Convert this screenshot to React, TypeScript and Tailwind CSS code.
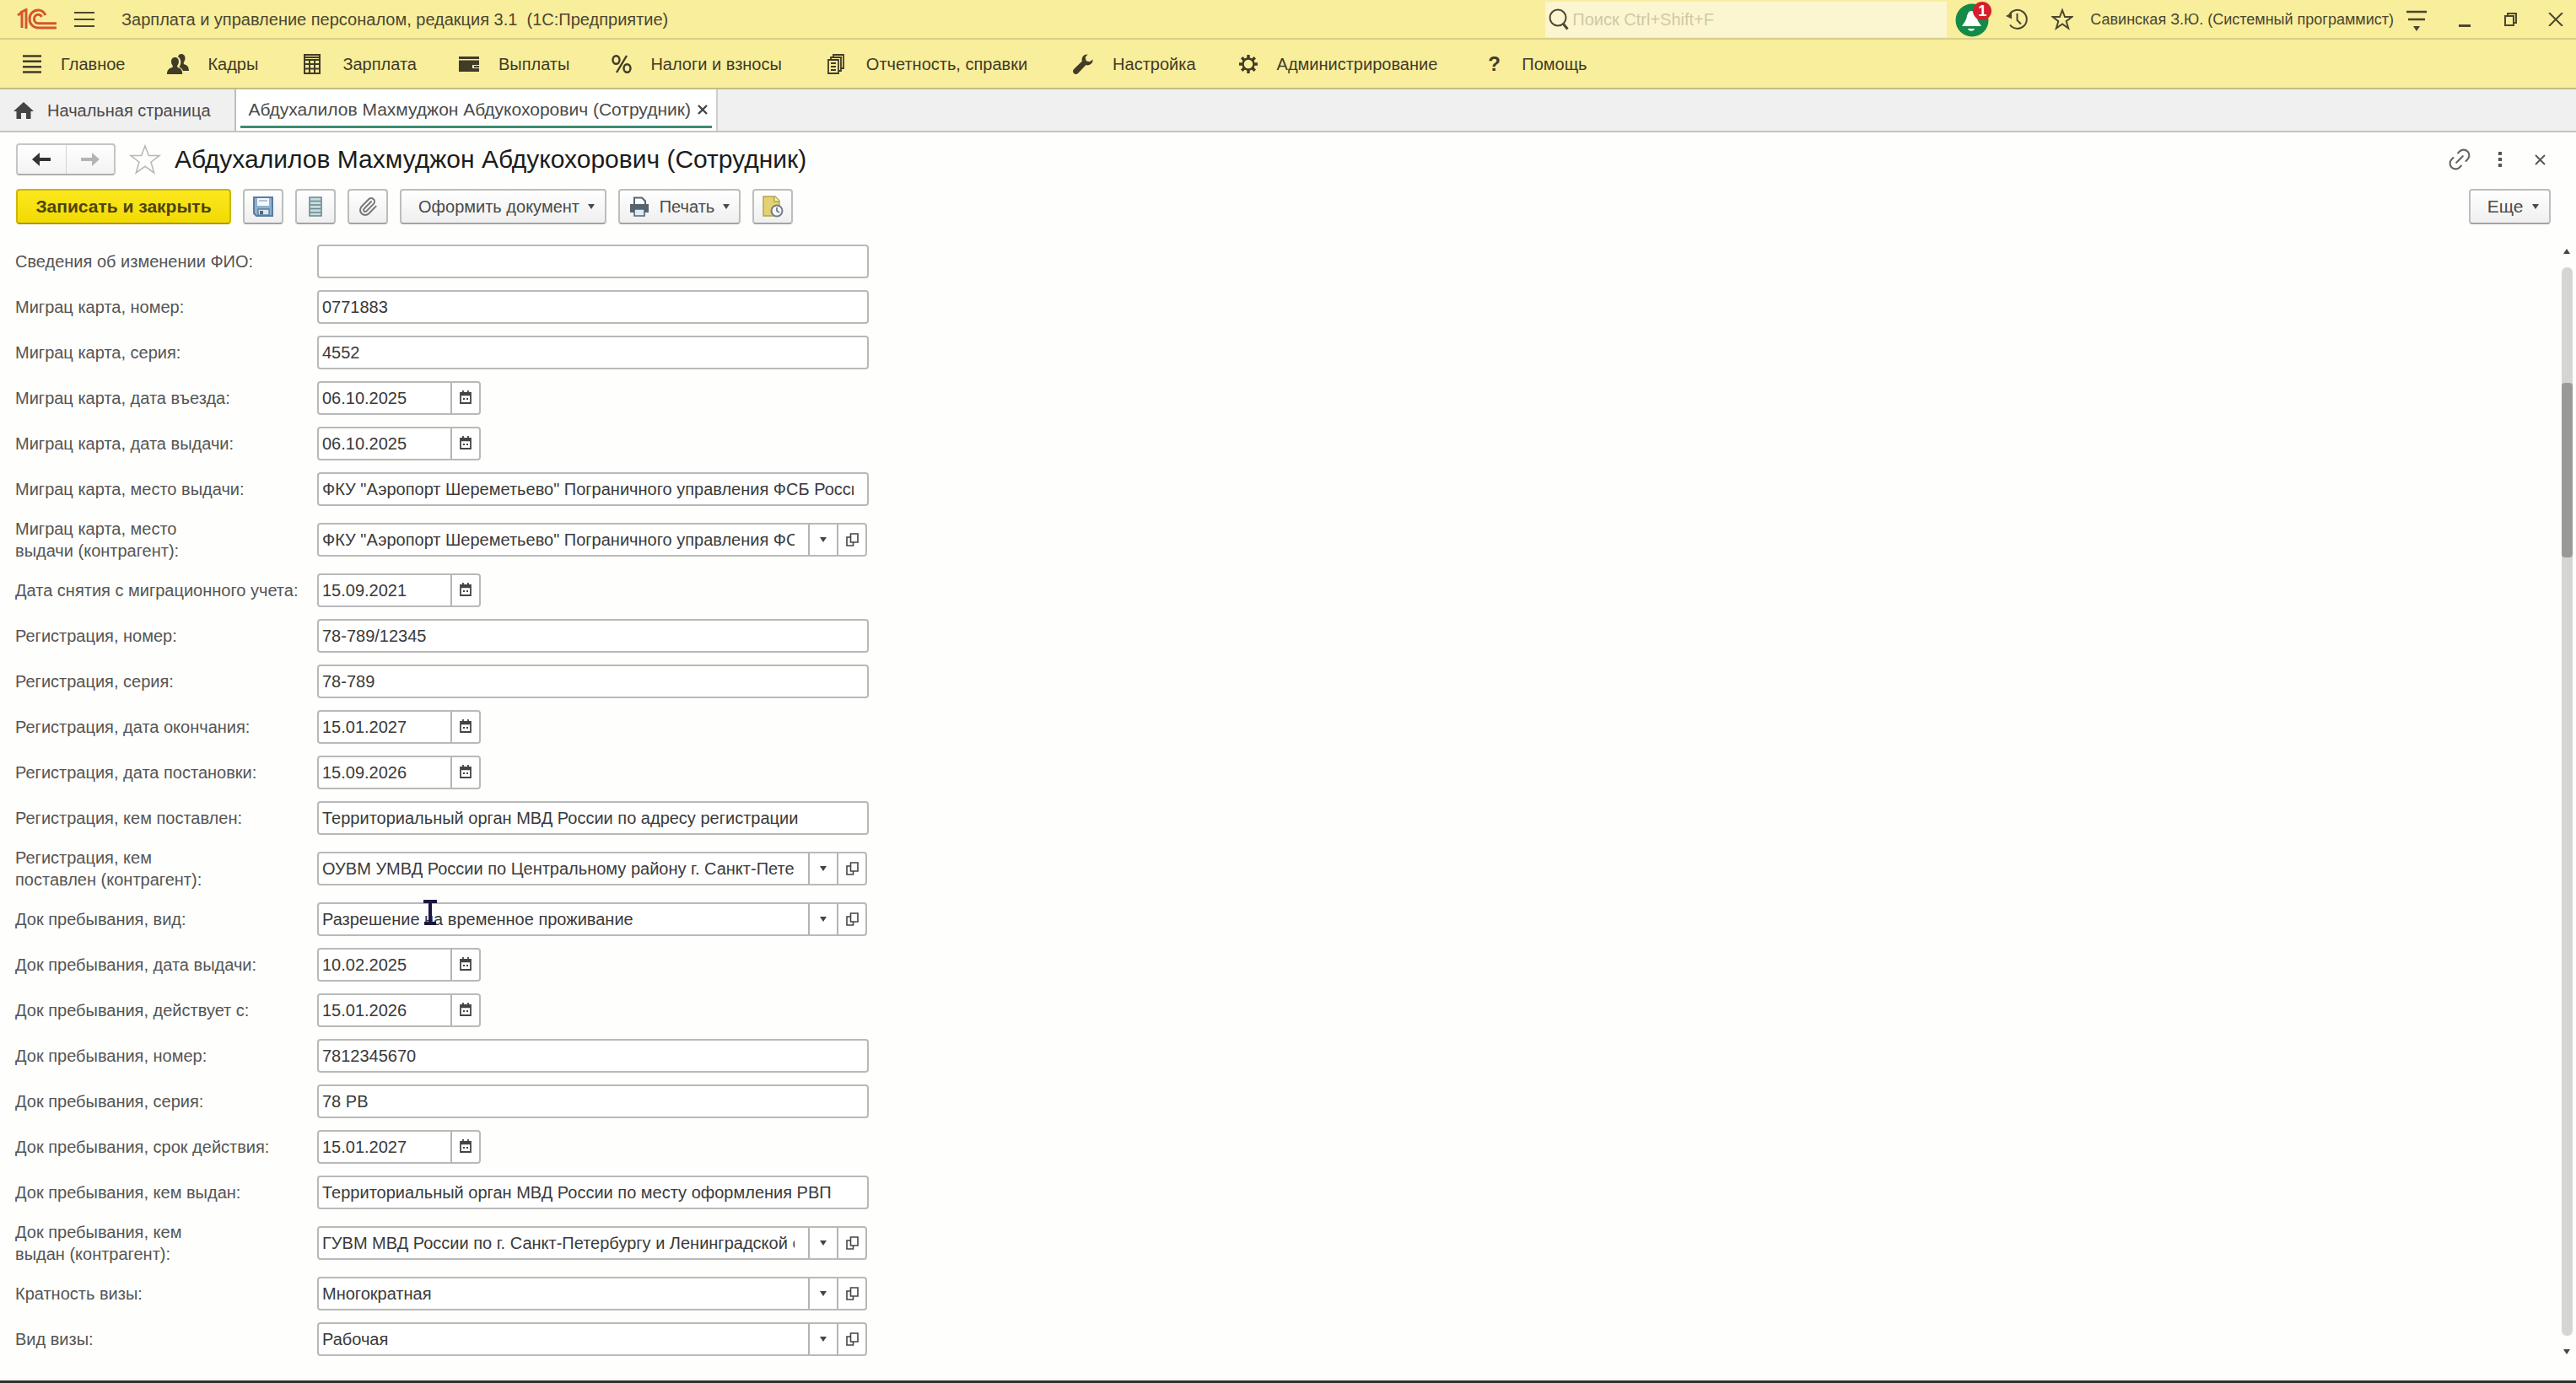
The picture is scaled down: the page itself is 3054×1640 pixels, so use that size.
import { useState } from "react";
import type { ReactNode } from "react";
import { Link2, Paperclip } from "lucide-react";

type FieldKind = "text" | "date" | "lookup";

interface Field {
  id: string;
  label: string;
  kind: FieldKind;
  value: string;
}

const FIELDS: Field[] = [
  { id: "fio", label: "Сведения об изменении ФИО:", kind: "text", value: "" },
  { id: "mk-number", label: "Миграц карта, номер:", kind: "text", value: "0771883" },
  { id: "mk-series", label: "Миграц карта, серия:", kind: "text", value: "4552" },
  { id: "mk-entry", label: "Миграц карта, дата въезда:", kind: "date", value: "06.10.2025" },
  { id: "mk-issued", label: "Миграц карта, дата выдачи:", kind: "date", value: "06.10.2025" },
  { id: "mk-place", label: "Миграц карта, место выдачи:", kind: "text", value: 'ФКУ "Аэропорт Шереметьево" Пограничного управления ФСБ России' },
  { id: "mk-place-org", label: "Миграц карта, место\nвыдачи (контрагент):", kind: "lookup", value: 'ФКУ "Аэропорт Шереметьево" Пограничного управления ФСБ России' },
  { id: "mk-removed", label: "Дата снятия с миграционного учета:", kind: "date", value: "15.09.2021" },
  { id: "reg-number", label: "Регистрация, номер:", kind: "text", value: "78-789/12345" },
  { id: "reg-series", label: "Регистрация, серия:", kind: "text", value: "78-789" },
  { id: "reg-end", label: "Регистрация, дата окончания:", kind: "date", value: "15.01.2027" },
  { id: "reg-start", label: "Регистрация, дата постановки:", kind: "date", value: "15.09.2026" },
  { id: "reg-by", label: "Регистрация, кем поставлен:", kind: "text", value: "Территориальный орган МВД России по адресу регистрации" },
  { id: "reg-by-org", label: "Регистрация, кем\nпоставлен (контрагент):", kind: "lookup", value: "ОУВМ УМВД России по Центральному району г. Санкт-Петербурга" },
  { id: "doc-type", label: "Док пребывания, вид:", kind: "lookup", value: "Разрешение на временное проживание" },
  { id: "doc-issued", label: "Док пребывания, дата выдачи:", kind: "date", value: "10.02.2025" },
  { id: "doc-from", label: "Док пребывания, действует с:", kind: "date", value: "15.01.2026" },
  { id: "doc-number", label: "Док пребывания, номер:", kind: "text", value: "7812345670" },
  { id: "doc-series", label: "Док пребывания, серия:", kind: "text", value: "78 РВ" },
  { id: "doc-until", label: "Док пребывания, срок действия:", kind: "date", value: "15.01.2027" },
  { id: "doc-by", label: "Док пребывания, кем выдан:", kind: "text", value: "Территориальный орган МВД России по месту оформления РВП" },
  { id: "doc-by-org", label: "Док пребывания, кем\nвыдан (контрагент):", kind: "lookup", value: "ГУВМ МВД России по г. Санкт-Петербургу и Ленинградской области" },
  { id: "visa-count", label: "Кратность визы:", kind: "lookup", value: "Многократная" },
  { id: "visa-type", label: "Вид визы:", kind: "lookup", value: "Рабочая" },
];

const FIELD_WIDTH: Record<FieldKind, string> = {
  text: "w-[654px]",
  date: "w-[194px]",
  lookup: "w-[652px]",
};

const toolButton =
  "flex h-[42px] shrink-0 items-center justify-center rounded border-2 border-[#bdbdbd] border-b-[#a3a3a3] bg-linear-to-b from-white to-[#efefef]";

function Caret({ className = "" }: { className?: string }) {
  return (
    <svg viewBox="0 0 8 6" className={`h-[6px] w-[8px] ${className}`}>
      <path d="M0 0h8L4 6z" fill="currentColor" />
    </svg>
  );
}

function LogoIcon() {
  return (
    <svg viewBox="0 0 48 26" className="h-[26px] w-[48px]" fill="none" stroke="#d4562f">
      <path d="M1 8l5-3v18M11 24V1.500L4 5" strokeWidth="3" />
      <path d="M34 8C32 4 29 2 25.500 2 19.500 2 15 6.500 15 12.500S19.500 23 25.500 23H47" strokeWidth="3" />
      <path d="M29.500 10c-.8-1.700-2.200-2.800-4-2.800-3 0-5 2.300-5 5.300s2 5.300 5 5.300H47" strokeWidth="3" />
    </svg>
  );
}

function MenuIcon({ name }: { name: string }) {
  switch (name) {
    case "main":
      return (
        <svg viewBox="0 0 24 24" className="size-6" stroke="currentColor" strokeWidth="2.600">
          <path d="M1 2.500h22M1 8.800h22M1 15.200h22M1 21.500h22" />
        </svg>
      );
    case "staff":
      return (
        <svg viewBox="0 0 26 24" className="h-6 w-[26px]" fill="currentColor">
          <path d="M17 0c3 0 4.500 2.400 4.500 5 0 2-.8 3.600-1.700 4.700v2.200c3.700 1.200 5.900 2.400 6.200 8.100h-7c-.8-2.200-2.600-3.800-4.500-4.600 1.700-2 2.300-5.500 1.500-8.300-.5-1.900-1.600-3.100-3-3.700C13.600 1.200 15 0 17 0z" />
          <path d="M9.500 4c3 0 4.400 2.300 4.400 5 0 2-.7 3.700-1.700 4.800v2c3.700 1 6 2.600 6 8.200H0c0-5.600 2.900-7.200 6.700-8.200v-2C5.700 12.700 5 11 5 9c0-2.700 1.500-5 4.500-5z" />
        </svg>
      );
    case "salary":
      return (
        <svg viewBox="0 0 20 24" className="h-6 w-5" fill="none" stroke="currentColor" strokeWidth="2">
          <path d="M1 1h18v22H1zM1 7h18M1 12h18M1 17.500h18M7 7v16M13 7v16M1 4h18" />
        </svg>
      );
    case "payments":
      return (
        <svg viewBox="0 0 24 18" className="h-[18px] w-6" fill="currentColor">
          <path d="M0 0h24v3H0zM0 4.500h24V10h-8v4h8v4H0z" />
          <path d="M18 11h6v2h-6z" />
        </svg>
      );
    case "taxes":
      return (
        <svg viewBox="0 0 24 22" className="h-[22px] w-6" fill="none" stroke="currentColor" strokeWidth="2.400">
          <ellipse cx="5.500" cy="6" rx="4" ry="4.800" />
          <ellipse cx="18.500" cy="16" rx="4" ry="4.800" />
          <path d="M18 1L6 21" />
        </svg>
      );
    case "reports":
      return (
        <svg viewBox="0 0 20 24" className="h-6 w-5" fill="none" stroke="currentColor" strokeWidth="1.800">
          <path d="M1 7h12v16H1zM4 7V4h12v16h-3M7 4V1h12v16h-3M4 11h6M4 15h6M4 19h6" />
        </svg>
      );
    case "settings":
      return (
        <svg viewBox="0 0 24 24" className="size-6" fill="currentColor">
          <path d="M23.500 6.500c.6 4.500-3.700 8-8 6.600L6 22.900c-1.400 1.400-3.600 1.400-4.900 0-1.400-1.400-1.400-3.500 0-4.900l9.800-9.500C9.600 4.200 13 0 17.500.5L14.700 4l1 4.300 4.300 1z" />
        </svg>
      );
    case "admin":
      return (
        <svg viewBox="0 0 24 24" className="size-6" fill="none" stroke="currentColor">
          <circle cx="12" cy="12" r="6.500" strokeWidth="2.400" />
          <path
            d="M12 1v4M12 19v4M1 12h4M19 12h4M4.200 4.200l3 3M16.800 16.800l3 3M4.200 19.800l3-3M16.800 7.200l3-3"
            strokeWidth="3.400"
          />
        </svg>
      );
    default:
      return <span className="text-[24px] leading-6 font-bold">?</span>;
  }
}

const MENU = [
  { icon: "main", title: "Главное", box: "w-[46px]", gap: "mr-[50px]" },
  { icon: "staff", title: "Кадры", box: "w-[48px]", gap: "mr-[54px]" },
  { icon: "salary", title: "Зарплата", box: "w-[46px]", gap: "mr-[50px]" },
  { icon: "payments", title: "Выплаты", box: "w-[47px]", gap: "mr-[50px]" },
  { icon: "taxes", title: "Налоги и взносы", box: "w-[46px]", gap: "mr-[54px]" },
  { icon: "reports", title: "Отчетность, справки", box: "w-[46px]", gap: "mr-[54px]" },
  { icon: "settings", title: "Настройка", box: "w-[47px]", gap: "mr-[50px]" },
  { icon: "admin", title: "Администрирование", box: "w-[46px]", gap: "mr-[60px]" },
  { icon: "help", title: "Помощь", box: "w-[40px]", gap: "" },
];

function TitleBar() {
  return (
    <header className="flex h-[47px] items-center border-b-2 border-[#d9cf86] pl-5 text-[#4c4630]">
      <LogoIcon />
      <button type="button" aria-label="Меню" className="ml-5 text-[#4c4630]">
        <svg viewBox="0 0 24 20" className="h-5 w-6" stroke="currentColor" strokeWidth="2">
          <path d="M0 2h24M0 10h24M0 18h24" />
        </svg>
      </button>
      <h1 className="ml-8 whitespace-nowrap">Зарплата и управление персоналом, редакция 3.1&nbsp; (1С:Предприятие)</h1>
      <label className="ml-auto flex h-[42px] w-[476px] items-center gap-1 bg-[#fcf6d0] pl-1">
        <svg viewBox="0 0 24 26" className="h-[26px] w-6 shrink-0" fill="none" stroke="currentColor" strokeWidth="2">
          <circle cx="11" cy="11" r="9.500" />
          <path d="M17.500 18.500l5 6" strokeWidth="3" />
        </svg>
        <input
          aria-label="Поиск"
          placeholder="Поиск Ctrl+Shift+F"
          className="w-full min-w-0 bg-transparent outline-none placeholder:text-[#cfc9a4]"
        />
      </label>
      <button type="button" aria-label="Уведомления" className="relative ml-[10px] h-[42px] w-[42px]">
        <svg viewBox="0 0 42 42" className="size-[42px]">
          <circle cx="20" cy="22" r="19.500" fill="#148a48" />
          <path d="M19 11c4 0 5.500 4 6.500 8 1 4 3.500 6.500 5.500 10H8c2-3.500 4.500-6 5.500-10s2-8 5.500-8zM15 32h8c-.5 2-2 2.500-4 2.500s-3.500-.5-4-2.500z" fill="#fff" />
        </svg>
        <span className="absolute top-0 -right-[1px] flex h-[22px] w-[22px] items-center justify-center rounded-full bg-[#d3202c] text-[18px] font-bold text-white">
          1
        </span>
      </button>
      <button type="button" aria-label="История" className="ml-[18px]">
        <svg viewBox="0 0 26 26" className="size-[26px]" fill="none" stroke="currentColor" strokeWidth="2">
          <path d="M4.500 7A11 11 0 1 1 5 19.500M13.500 6v8l4.500 4.500" />
          <path d="M0 9l7 3.500V5z" fill="currentColor" stroke="none" />
        </svg>
      </button>
      <button type="button" aria-label="Избранное" className="ml-7">
        <svg viewBox="0 0 26 26" className="size-[26px]" fill="none" stroke="currentColor" strokeWidth="2">
          <path d="M13 2l3 8h8.500l-6.800 5.200 2.500 8.300L13 18.500l-7.200 5 2.500-8.300L1.500 10H10z" />
        </svg>
      </button>
      <span className="ml-5 text-[18px] whitespace-nowrap">Савинская З.Ю. (Системный программист)</span>
      <button type="button" aria-label="Настройки панели" className="ml-[15px]">
        <svg viewBox="0 0 24 30" className="h-[30px] w-6" stroke="currentColor" strokeWidth="2.400">
          <path d="M0 6h24M2 15h20" />
          <path d="M8 23h8l-4 6z" fill="currentColor" stroke="none" />
        </svg>
      </button>
      <button type="button" aria-label="Свернуть" className="ml-[38px]">
        <svg viewBox="0 0 14 24" className="h-6 w-[14px]">
          <path d="M0 18h14v3H0z" fill="currentColor" />
        </svg>
      </button>
      <button type="button" aria-label="Развернуть" className="ml-10">
        <svg viewBox="0 0 15 16" className="h-4 w-[15px]" fill="none" stroke="currentColor" strokeWidth="2">
          <path d="M1 4h10v11H1zM4 4V1h10v11h-3" />
        </svg>
      </button>
      <button type="button" aria-label="Закрыть" className="mr-[15px] ml-[37px]">
        <svg viewBox="0 0 18 16" className="h-4 w-[18px]" stroke="currentColor" strokeWidth="2">
          <path d="M1 0l16 16M17 0L1 16" />
        </svg>
      </button>
    </header>
  );
}

function SectionMenu() {
  return (
    <nav className="flex h-[59px] items-center border-b-2 border-[#c4bc84] pl-[26px] text-[#423b28]">
      {MENU.map((m) => (
        <a key={m.icon} href="#" className={`flex items-center whitespace-nowrap ${m.gap}`}>
          <span className={`flex ${m.box}`}>
            <MenuIcon name={m.icon} />
          </span>
          {m.title}
        </a>
      ))}
    </nav>
  );
}

function TabStrip() {
  return (
    <div className="flex h-[51px] border-b-2 border-[#c2c4c4] bg-[#f0f0f0] text-[#4a4a4a]">
      <a href="#" className="flex items-center border-r-2 border-[#bdbdbd] pr-7 pl-4 whitespace-nowrap">
        <svg viewBox="0 0 24 20" className="mr-4 h-5 w-6" fill="#444">
          <path d="M12 0l12 11h-3.500v9H15v-7H9v7H3.500v-9H0z" />
        </svg>
        Начальная страница
      </a>
      <div className="flex border-r-2 border-[#cfcfcf] bg-white px-[5px]">
        <div className="mb-[3px] flex items-center border-b-[3px] border-[#3b8c70] pt-1 pr-[5px] pl-[10px] text-[21px] whitespace-nowrap">
          Абдухалилов Махмуджон Абдукохорович (Сотрудник)
          <button type="button" aria-label="Закрыть вкладку" className="ml-2">
            <svg viewBox="0 0 12 12" className="size-3" stroke="#444" strokeWidth="2.400">
              <path d="M1 1l10 10M11 1L1 11" />
            </svg>
          </button>
        </div>
      </div>
    </div>
  );
}

function FormHeader() {
  return (
    <div className="flex h-[38px] items-center pr-9 pl-[19px]">
      <div className="flex h-[38px] w-[118px] rounded border-2 border-[#c6c6c6] border-b-[#adadad] bg-linear-to-b from-white to-[#f3f3f3]">
        <button type="button" aria-label="Назад" className="flex flex-1 items-center justify-center border-r border-[#d4d4d4] text-[#333]">
          <svg viewBox="0 0 22 16" className="h-4 w-[22px]">
            <path d="M0 8L9 0v6h13v4H9v6z" fill="currentColor" />
          </svg>
        </button>
        <button type="button" aria-label="Вперед" className="flex flex-1 items-center justify-center text-[#b4b4b4]">
          <svg viewBox="0 0 22 16" className="h-4 w-[22px]">
            <path d="M22 8l-9-8v6H0v4h13v6z" fill="currentColor" />
          </svg>
        </button>
      </div>
      <button type="button" aria-label="В избранное" className="ml-4 text-[#b9b9b9]">
        <svg viewBox="0 0 38 36" className="h-9 w-[38px]" fill="none" stroke="currentColor" strokeWidth="1.600">
          <path d="M19 2l4.300 11.500H36l-10 7.700L29.700 34 19 26.300 8.300 34 12 21.200 2 13.500h12.700z" />
        </svg>
      </button>
      <h2 className="ml-4 text-[30px] leading-9 whitespace-nowrap text-[#1c1c1c]">
        Абдухалилов Махмуджон Абдукохорович (Сотрудник)
      </h2>
      <button type="button" aria-label="Получить ссылку" className="ml-auto text-[#666]">
        <Link2 size={32} strokeWidth={1.600} className="-rotate-45" />
      </button>
      <button type="button" aria-label="Действия" className="ml-[30px] text-[#555]">
        <svg viewBox="0 0 5 18" className="h-[18px] w-[5px]" fill="currentColor">
          <path d="M0 0h4v4H0zM0 7h4v4H0zM0 14h4v4H0z" />
        </svg>
      </button>
      <button type="button" aria-label="Закрыть форму" className="ml-[38px] text-[#555]">
        <svg viewBox="0 0 13 13" className="size-[13px]" stroke="currentColor" strokeWidth="1.800">
          <path d="M1 1l11 11M12 1L1 12" />
        </svg>
      </button>
    </div>
  );
}

function Toolbar() {
  return (
    <div className="mt-4 flex items-center gap-[14px] pr-[30px] pl-[19px] text-[#4a4a4a]">
      <button
        type="button"
        className="h-[42px] w-[255px] rounded border-2 border-[#cdb70c] border-b-[#a89a1c] bg-linear-to-b from-[#fbe81c] to-[#f2da00] text-[21px] font-bold whitespace-nowrap text-[#4d4410]"
      >
        Записать и закрыть
      </button>
      <button type="button" aria-label="Записать" className={`w-12 ${toolButton}`}>
        <svg viewBox="0 0 24 24" className="size-6">
          <path d="M1 1h22v22H4l-3-3z" fill="#8fb0cf" stroke="#5b7d9f" strokeWidth="2" />
          <path d="M5 2h14v9H5z" fill="#f4f8fb" />
          <path d="M7 5h10" stroke="#9db8d0" strokeWidth="1.600" />
          <path d="M6 15h13v7H6z" fill="#dfe8ef" stroke="#5b7d9f" strokeWidth="1.400" />
          <path d="M8 17h4v4H8z" fill="#46688c" />
        </svg>
      </button>
      <button type="button" aria-label="Список" className={`w-12 ${toolButton}`}>
        <svg viewBox="0 0 16 24" className="h-6 w-4" stroke="#6b858c" strokeWidth="1.600">
          <path d="M1 1h14v22H1z" fill="#c6dde0" />
          <path d="M2 5.500h12M2 10h12M2 14.500h12M2 19h12" />
        </svg>
      </button>
      <button type="button" aria-label="Файлы" className={`w-12 ${toolButton}`}>
        <Paperclip size={24} color="#777" strokeWidth={2} />
      </button>
      <button type="button" className={`w-[245px] gap-[10px] pl-2 whitespace-nowrap ${toolButton}`}>
        Оформить документ
        <Caret />
      </button>
      <button type="button" className={`w-[145px] whitespace-nowrap ${toolButton}`}>
        <svg viewBox="0 0 24 24" className="mr-3 size-6">
          <path d="M6 9V1.500h9l4 4V9" fill="#fff" stroke="#56646e" strokeWidth="2" />
          <path d="M1 9h22v10H1z" fill="#56646e" />
          <path d="M6 15h12v8H6z" fill="#dcecf6" stroke="#56646e" strokeWidth="1.600" />
        </svg>
        Печать
        <Caret className="ml-[10px]" />
      </button>
      <button type="button" aria-label="Напоминание" className={`w-12 ${toolButton}`}>
        <svg viewBox="0 0 26 26" className="size-[26px]">
          <path d="M2 1h14l5 5v18H2z" fill="#e3d173" stroke="#b3a24c" strokeWidth="1.400" />
          <path d="M15 1v6h6" fill="#faf3c4" stroke="#b3a24c" strokeWidth="1.400" />
          <circle cx="18" cy="18" r="6.500" fill="#f4f6f8" stroke="#717b88" strokeWidth="2" />
          <path d="M18 14v4l3 2" fill="none" stroke="#717b88" strokeWidth="1.800" />
        </svg>
      </button>
      <button type="button" className={`ml-auto w-[97px] gap-[11px] pl-2 text-[21px] ${toolButton}`}>
        Еще
        <Caret />
      </button>
    </div>
  );
}

function SideButton({ label, children }: { label: string; children: ReactNode }) {
  return (
    <button
      type="button"
      aria-label={label}
      className="flex w-[34px] shrink-0 items-center justify-center border-l-2 border-[#b4b4b4] text-[#444]"
    >
      {children}
    </button>
  );
}

function FieldRow({ field }: { field: Field }) {
  const [value, setValue] = useState(field.value);
  return (
    <div className="flex items-center">
      <label htmlFor={field.id} className="w-[358px] shrink-0 leading-[26px] whitespace-pre text-[#555]">
        {field.label}
      </label>
      <div
        className={`flex h-10 overflow-hidden rounded border-2 border-[#b9b9b9] bg-white ${FIELD_WIDTH[field.kind]}`}
      >
        <input
          id={field.id}
          value={value}
          onChange={(e) => setValue(e.target.value)}
          className="mr-4 min-w-0 flex-1 bg-transparent pl-1 text-[#3a3a3a] outline-none"
        />
        {field.kind === "date" && (
          <SideButton label="Выбрать дату">
            <svg viewBox="0 0 16 18" className="h-[18px] w-4" fill="none" stroke="currentColor" strokeWidth="1.800">
              <path d="M2 3h12v12H2zM5 0v4M11 0v4" />
              <path d="M2 5h12" strokeWidth="2.600" />
              <path d="M5 9h2v2H5zM9 9h2v2H9z" fill="currentColor" stroke="none" />
            </svg>
          </SideButton>
        )}
        {field.kind === "lookup" && (
          <>
            <SideButton label="Выбрать из списка">
              <Caret />
            </SideButton>
            <SideButton label="Открыть">
              <svg viewBox="0 0 15 16" className="h-4 w-[15px]" fill="none" stroke="currentColor" strokeWidth="1.600">
                <path d="M5.500 1h8.500v10H5.500zM5.500 5H1v10h7.500v-4" />
              </svg>
            </SideButton>
          </>
        )}
      </div>
    </div>
  );
}

function ScrollRail() {
  return (
    <div className="flex w-[22px] flex-col items-center pt-[5px] pb-[31px] text-[#444]">
      <Caret className="rotate-180" />
      <div className="my-4 flex w-[13px] flex-1 flex-col rounded-md bg-[#d5d5d4]">
        <div className="flex-[137]" />
        <div className="flex-[206] rounded-sm bg-[#999998]" />
        <div className="flex-[922]" />
      </div>
      <Caret />
    </div>
  );
}

export default function App() {
  return (
    <div className="flex min-h-screen flex-col border-b-[3px] border-[#2f2f2f] bg-[#fefefc] font-['Liberation_Sans',Arial,sans-serif] text-[20px] leading-6">
      <div className="bg-[#f8ee9c]">
        <TitleBar />
        <SectionMenu />
      </div>
      <TabStrip />
      <main className="flex flex-1 flex-col pt-[13px]">
        <FormHeader />
        <Toolbar />
        <div className="mt-6 flex flex-1">
          <form className="relative flex flex-1 flex-col gap-[14px] pb-7 pl-[18px]">
            {FIELDS.map((f) => (
              <FieldRow key={f.id} field={f} />
            ))}
            {/* text pointer resting over the form */}
            <svg viewBox="0 0 18 30" className="pointer-events-none absolute top-[777px] left-[501px] h-[30px] w-[18px]" stroke="#1f1640" strokeWidth="4">
              <path d="M1 2h16M9 2v26M2 28h14" />
            </svg>
          </form>
          <ScrollRail />
        </div>
      </main>
    </div>
  );
}
